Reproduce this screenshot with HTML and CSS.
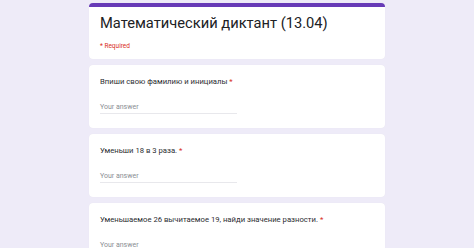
FILE: index.html
```html
<!DOCTYPE html>
<html lang="ru">
<head>
<meta charset="utf-8">
<link rel="stylesheet" href="styles.css">
</head>
<body>
<main class="form">
  <section class="card card-head">
    <h1 class="title">Математический диктант (13.04)</h1>
    <p class="required">* Required</p>
  </section>
  <section class="card">
    <p class="question">Впиши свою фамилию и инициалы <span class="star">*</span></p>
    <div class="answer">Your answer</div>
  </section>
  <section class="card">
    <p class="question">Уменьши 18 в 3 раза. <span class="star">*</span></p>
    <div class="answer">Your answer</div>
  </section>
  <section class="card">
    <p class="question">Уменьшаемое 26 вычитаемое 19, найди значение разности. <span class="star">*</span></p>
    <div class="answer">Your answer</div>
  </section>
</main>
</body>
</html>
```
FILE: styles.css
```css
html, body {
  margin: 0;
  padding: 0;
  height: 100%;
  overflow: hidden;
}
body {
  background: #eeebf8;
  font-family: Roboto, "Noto Sans", sans-serif;
}
.form {
  width: 296px;
  margin-left: 89px;
  padding-top: 3px;
  display: flex;
  flex-direction: column;
  gap: 6px;
}
.card {
  background: #ffffff;
  border-radius: 4px;
  padding: 11px 11px 14px;
  box-shadow: 0 0 1px rgba(0,0,0,0.06);
}
.card-head {
  border-top: 4px solid #673ab7;
  padding-top: 6px;
  padding-bottom: 8px;
}
.title {
  margin: 0;
  font-size: 14.7px;
  line-height: 20px;
  font-weight: 400;
  color: #202124;
}
.required {
  margin: 9px 0 0;
  font-size: 6.5px;
  line-height: 9px;
  color: #d93025;
}
.question {
  margin: 0;
  font-size: 7.7px;
  line-height: 12px;
  color: #2b2c30;
}
.star {
  color: #d93025;
}
.answer {
  margin-top: 14px;
  width: 137px;
  font-size: 7px;
  line-height: 10px;
  color: #8a8e93;
  padding-bottom: 1px;
  border-bottom: 1px solid #e8e8ec;
}
```
